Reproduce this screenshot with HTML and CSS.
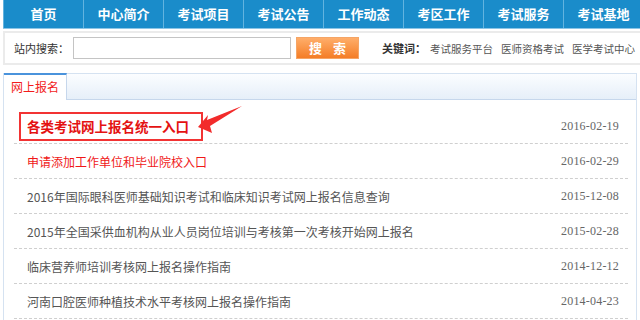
FILE: index.html
```html
<!DOCTYPE html>
<html lang="zh-CN">
<head>
<meta charset="utf-8">
<title>网上报名</title>
<link rel="stylesheet" href="styles.css">
</head>
<body>
<div class="nav">
  <a>首页</a><a>中心简介</a><a>考试项目</a><a>考试公告</a><a>工作动态</a><a>考区工作</a><a>考试服务</a><a>考试基地</a>
</div>
<div class="search">
  <span class="s-label">站内搜索：</span>
  <input class="s-input" type="text">
  <button class="s-btn">搜 索</button>
  <span class="kw-label">关键词：</span>
  <span class="kw">考试服务平台</span>
  <span class="kw">医师资格考试</span>
  <span class="kw">医学考试中心</span>
</div>
<div class="panel">
  <div class="tabs"><div class="tab">网上报名</div></div>
  <ul class="list">
    <li class="row first">
      <span class="hl">各类考试网上报名统一入口</span>
      <svg class="arrow" width="50" height="32" viewBox="0 0 50 32"><polygon points="3,24 13,12 12,17 47,3 15,23 17,30" fill="#f22b2b"/></svg>
      <span class="date">2016-02-19</span>
    </li>
    <li class="row red"><span class="t">申请添加工作单位和毕业院校入口</span><span class="date">2016-02-29</span></li>
    <li class="row"><span class="t">2016年国际眼科医师基础知识考试和临床知识考试网上报名信息查询</span><span class="date">2015-12-08</span></li>
    <li class="row"><span class="t">2015年全国采供血机构从业人员岗位培训与考核第一次考核开始网上报名</span><span class="date">2015-02-28</span></li>
    <li class="row"><span class="t">临床营养师培训考核网上报名操作指南</span><span class="date">2014-12-12</span></li>
    <li class="row"><span class="t">河南口腔医师种植技术水平考核网上报名操作指南</span><span class="date">2014-04-23</span></li>
  </ul>
</div>
</body>
</html>
```
FILE: styles.css
```css
html { overflow: hidden; }
body {
  margin: 0;
  padding: 0 0 0 3px;
  font-family: "Noto Sans CJK SC", "Liberation Sans", sans-serif;
  background: #fff;
  width: 637px;
}
.nav {
  display: flex;
  height: 28px;
  background: #1a8cca;
  border-bottom: 1px solid #8cc5e6;
  white-space: nowrap;
}
.nav a {
  flex: 0 0 80px;
  box-sizing: border-box;
  border-left: 1px solid #62b3df;
  color: #fff;
  text-align: center;
  line-height: 28px;
  font-size: 13px;
  font-weight: bold;
}
.search {
  margin-top: 2px;
  height: 30px;
  border: 2px solid #ebebeb;
  border-right: none;
  display: flex;
  align-items: center;
  white-space: nowrap;
  font-size: 11px;
  color: #333;
  overflow: hidden;
}
.search > * { flex-shrink: 0; }
.s-label { margin-left: 9px; width: 59px; }
.s-input {
  box-sizing: border-box;
  width: 218px;
  height: 22px;
  margin: 0;
  border: 1px solid #c4c4c4;
  padding: 0;
}
.s-btn {
  box-sizing: border-box;
  width: 63px;
  height: 22px;
  margin: 0 0 0 5px;
  border: 1px solid #f5a566;
  background: linear-gradient(#ffae6a, #f47d26);
  color: #fff;
  font-family: "Noto Sans CJK SC", sans-serif;
  font-size: 13px;
  font-weight: bold;
  letter-spacing: 4px;
  padding: 0 0 0 4px;
  line-height: 20px;
}
.kw-label { margin-left: 23px; font-weight: bold; color: #333; margin-right: 4px; }
.kw { color: #555; margin-right: 8px; font-size: 10.5px; }
.panel {
  margin-top: 8px;
  width: 632px;
  border: 1px solid #d5e2f1;
  border-top: none;
  height: 260px;
}
.tabs {
  height: 25px;
  border-top: 1px solid #d5e2f1;
  border-bottom: 1px solid #c6d7ec;
  background: linear-gradient(#fbfdff, #e6eff9);
  display: flex;
}
.tab {
  box-sizing: border-box;
  width: 63px;
  height: 27px;
  margin-top: -1px;
  border-top: 2px solid #4a93dc;
  border-right: 1px solid #c6d7ec;
  background: #fff;
  color: #f21c1c;
  font-size: 12px;
  text-align: center;
  line-height: 24px;
}
.list {
  list-style: none;
  margin: 0;
  padding: 9px 8px 0 10px;
}
.row {
  position: relative;
  height: 34px;
  border-bottom: 1px dashed #cfcfcf;
  display: flex;
  align-items: center;
  padding-left: 13px;
  font-size: 12px;
  color: #555;
  white-space: nowrap;
}
.row .t { flex: 1; }
.row.red { color: #f01818; }
.date {
  margin-left: auto;
  font-family: "Liberation Serif", serif;
  font-size: 12px;
  color: #666;
  padding-right: 9px;
  letter-spacing: 0.2px;
}
.hl {
  display: inline-block;
  margin-left: -8px;
  padding: 2px 12px 2px 6px;
  border: 2px solid #f23333;
  color: #e41212;
  font-size: 13.5px;
  font-weight: bold;
  line-height: 21px;
}
.arrow {
  position: absolute;
  left: 181px;
  top: -6px;
}
```
